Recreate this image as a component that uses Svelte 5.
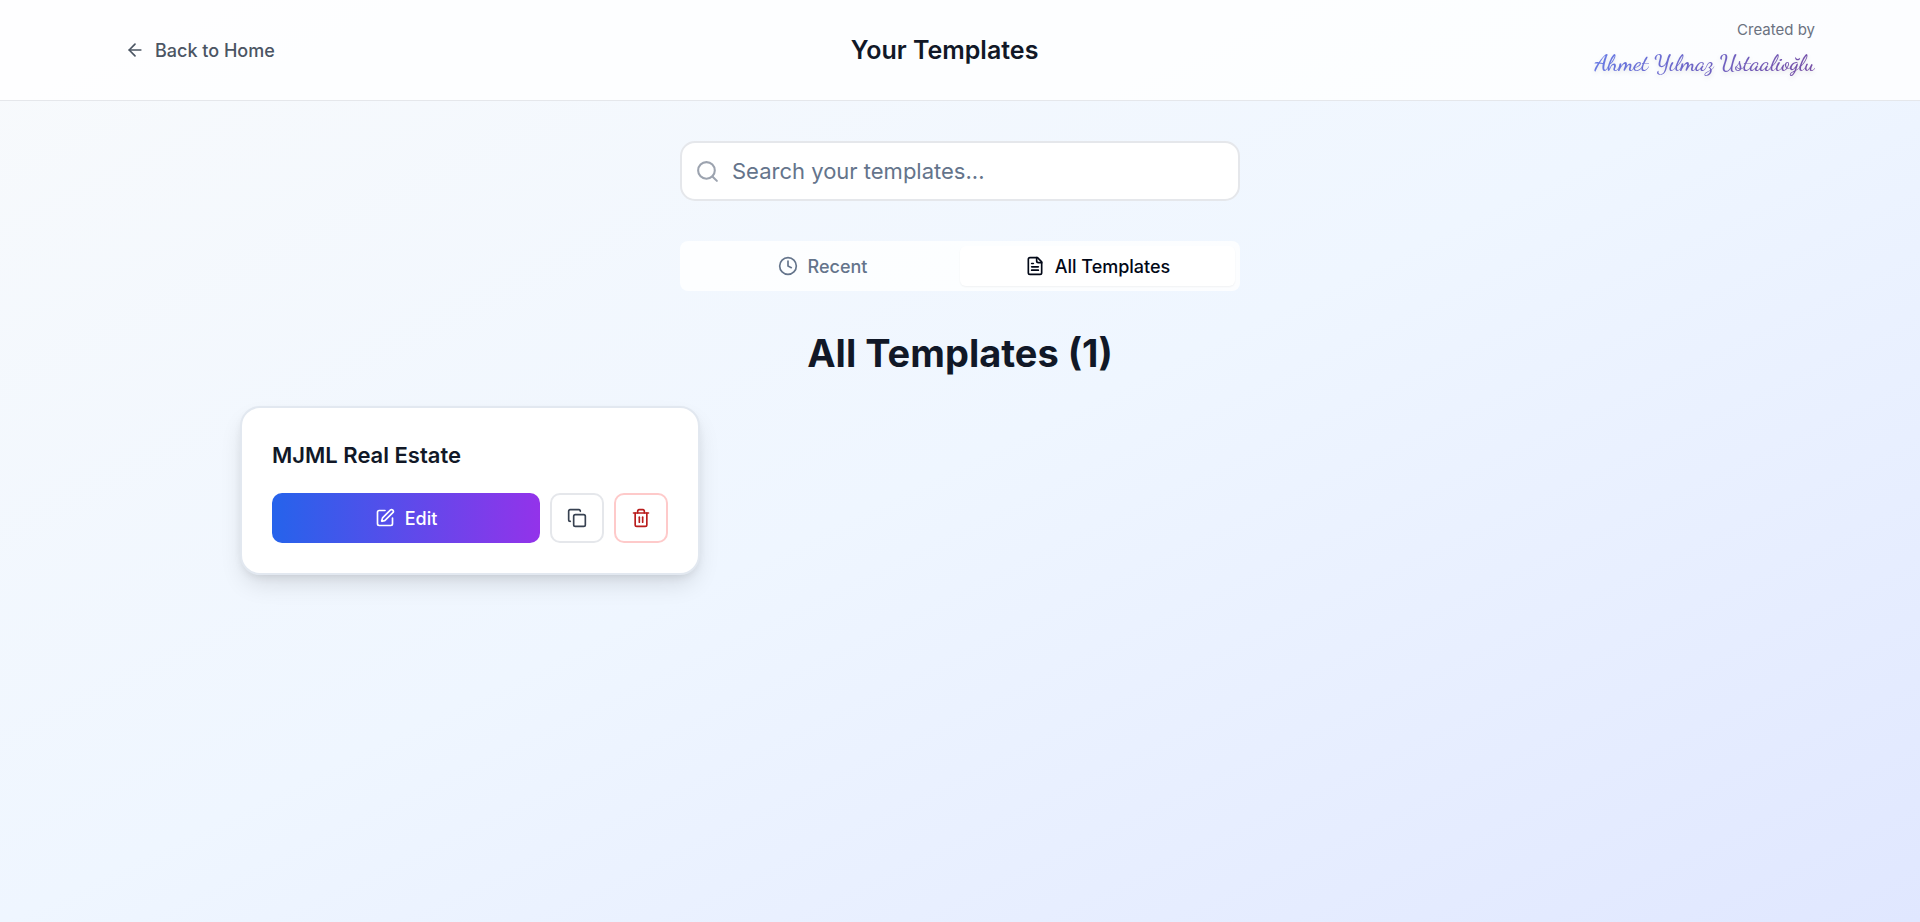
<script>
  let templates = $state([{ id: 1, name: "MJML Real Estate", recent: false }]);
  let query = $state("");
  let tab = $state("all");

  let visible = $derived(
    templates.filter(
      t =>
        (tab === "all" || t.recent) &&
        t.name.toLowerCase().includes(query.trim().toLowerCase())
    )
  );

  function duplicate(template) {
    templates.push({ ...template, id: Date.now(), name: template.name + " (Copy)" });
  }

  function remove(template) {
    templates = templates.filter(t => t.id !== template.id);
  }
</script>

<div class="page">
  <header>
    <div class="bar">
      <a class="back" href="#home">
        <svg class="icon" viewBox="0 0 24 24"><path d="m12 19-7-7 7-7" /><path d="M19 12H5" /></svg>
        Back to Home
      </a>
      <h1>Your Templates</h1>
      <div class="author">
        <span class="created">Created by</span>
        <span class="signature">Ahmet Yılmaz Ustaalioğlu</span>
      </div>
    </div>
  </header>

  <main>
    <div class="search">
      <svg class="icon" viewBox="0 0 24 24"><circle cx="11" cy="11" r="8" /><path d="m21 21-4.3-4.3" /></svg>
      <input type="text" aria-label="Search your templates" placeholder="Search your templates..." bind:value={query} />
    </div>

    <div class="tabs" role="tablist">
      <button role="tab" aria-selected={tab === "recent"} class:active={tab === "recent"} onclick={() => (tab = "recent")}>
        <svg class="icon" viewBox="0 0 24 24"><circle cx="12" cy="12" r="10" /><path d="M12 6v6l4 2" /></svg>
        Recent
      </button>
      <button role="tab" aria-selected={tab === "all"} class:active={tab === "all"} onclick={() => (tab = "all")}>
        <svg class="icon" viewBox="0 0 24 24">
          <path d="M15 2H6a2 2 0 0 0-2 2v16a2 2 0 0 0 2 2h12a2 2 0 0 0 2-2V7Z" />
          <path d="M14 2v4a2 2 0 0 0 2 2h4" />
          <path d="M10 9H8" /><path d="M16 13H8" /><path d="M16 17H8" />
        </svg>
        All Templates
      </button>
    </div>

    <h2>{tab === "all" ? "All Templates" : "Recent"} ({visible.length})</h2>

    <div class="grid">
      {#each visible as template (template.id)}
        <article class="card">
          <h3>{template.name}</h3>
          <div class="actions">
            <button class="edit">
              <svg class="icon" viewBox="0 0 24 24">
                <path d="M12 3H5a2 2 0 0 0-2 2v14a2 2 0 0 0 2 2h14a2 2 0 0 0 2-2v-7" />
                <path d="M18.375 2.625a1 1 0 0 1 3 3l-9.013 9.014a2 2 0 0 1-.853.505l-2.873.84a.5.5 0 0 1-.62-.62l.84-2.873a2 2 0 0 1 .506-.852z" />
              </svg>
              Edit
            </button>
            <button class="copy" aria-label="Duplicate" onclick={() => duplicate(template)}>
              <svg class="icon" viewBox="0 0 24 24">
                <rect width="14" height="14" x="8" y="8" rx="2" />
                <path d="M4 16c-1.1 0-2-.9-2-2V4c0-1.1.9-2 2-2h10c1.1 0 2 .9 2 2" />
              </svg>
            </button>
            <button class="delete" aria-label="Delete" onclick={() => remove(template)}>
              <svg class="icon" viewBox="0 0 24 24">
                <path d="M3 6h18" />
                <path d="M19 6v14c0 1-1 2-2 2H7c-1 0-2-1-2-2V6" />
                <path d="M8 6V4c0-1 1-2 2-2h4c1 0 2 1 2 2v2" />
                <path d="M10 11v6" /><path d="M14 11v6" />
              </svg>
            </button>
          </div>
        </article>
      {/each}
    </div>
  </main>
</div>

<style>
  :global(body) {
    margin: 0;
  }
  .page,
  .page * {
    box-sizing: border-box;
  }
  .page {
    min-height: 100vh;
    font-family: Inter, "Liberation Sans", sans-serif;
    color: #111827;
    background: linear-gradient(to bottom right, #f8fafc, #eff6ff, #e0e7ff);
  }
  h1,
  h2,
  h3 {
    margin: 0;
  }
  button,
  input {
    font-family: inherit;
  }
  button {
    display: flex;
    align-items: center;
    justify-content: center;
    gap: 10px;
    border: 0;
    font-size: 18px;
    font-weight: 500;
    cursor: pointer;
  }
  .icon {
    width: 20px;
    height: 20px;
    flex-shrink: 0;
    fill: none;
    stroke: currentColor;
    stroke-width: 2;
    stroke-linecap: round;
    stroke-linejoin: round;
  }

  header {
    background: rgba(255, 255, 255, 0.8);
    border-bottom: 1px solid #e5e7eb;
  }
  .bar {
    display: flex;
    align-items: center;
    justify-content: space-between;
    max-width: 1750px;
    margin: 0 auto;
    padding: 20px;
  }
  .back {
    display: flex;
    align-items: center;
    gap: 10px;
    padding: 0 20px;
    color: #4b5563;
    font-size: 18px;
    font-weight: 500;
    text-decoration: none;
  }
  h1 {
    font-size: 25px;
    line-height: 35px;
    font-weight: 600;
  }
  .author {
    display: flex;
    flex-direction: column;
    align-items: flex-end;
  }
  .created {
    color: #6b7280;
    font-size: 15px;
    line-height: 20px;
  }
  .signature {
    padding-top: 5px;
    font-family: "Dancing Script", "Liberation Serif", cursive;
    font-size: 23px;
    line-height: 35px;
    font-weight: 600;
    color: transparent;
    background: linear-gradient(135deg, #667eea, #764ba2);
    background-clip: text;
    filter: drop-shadow(0 2px 2px rgba(0, 0, 0, 0.1));
  }

  main {
    display: flex;
    flex-direction: column;
    align-items: center;
    max-width: 1480px;
    margin: 0 auto;
    padding: 40px 20px;
  }
  .search {
    position: relative;
    width: 100%;
    max-width: 560px;
    margin-bottom: 40px;
  }
  .search .icon {
    position: absolute;
    left: 15px;
    top: 18px;
    width: 25px;
    height: 25px;
    color: #9ca3af;
  }
  .search input {
    display: block;
    width: 100%;
    height: 60px;
    padding: 0 20px 0 50px;
    border: 2px solid #e5e7eb;
    border-radius: 15px;
    background: #fff;
    color: #111827;
    font-size: 22px;
  }
  .search input::placeholder {
    color: #64748b;
  }
  .tabs {
    display: grid;
    grid-template-columns: 1fr 1fr;
    width: 100%;
    max-width: 560px;
    height: 50px;
    margin-bottom: 40px;
    padding: 5px;
    border-radius: 8px;
    background: rgba(255, 255, 255, 0.8);
  }
  .tabs button {
    border-radius: 6px;
    background: none;
    color: #64748b;
  }
  .tabs .active {
    background: #fff;
    color: #020817;
    box-shadow: 0 1px 2px rgba(0, 0, 0, 0.05);
  }
  h2 {
    margin-bottom: 30px;
    font-size: 38px;
    line-height: 45px;
    font-weight: 700;
  }
  .grid {
    display: grid;
    grid-template-columns: repeat(3, 1fr);
    gap: 30px;
    width: 100%;
  }
  .card {
    padding: 30px;
    border: 2px solid #e2e8f0;
    border-radius: 20px;
    background: #fff;
    box-shadow: 0 12px 25px -4px rgba(0, 0, 0, 0.12), 0 4px 10px -3px rgba(0, 0, 0, 0.1);
  }
  h3 {
    margin-bottom: 20px;
    font-size: 22px;
    line-height: 35px;
    font-weight: 600;
  }
  .actions {
    display: flex;
    gap: 10px;
  }
  .actions button {
    height: 50px;
    border-radius: 10px;
  }
  .actions .edit {
    flex: 1;
    background: linear-gradient(to right, #2563eb, #9333ea);
    color: #fff;
  }
  .copy,
  .delete {
    width: 54px;
    border: 2px solid #e5e7eb;
    background: #fff;
    color: #374151;
  }
  .delete {
    border-color: #fecaca;
    color: #b91c1c;
  }

  @media (max-width: 1000px) {
    .grid {
      grid-template-columns: 1fr;
    }
  }
</style>
